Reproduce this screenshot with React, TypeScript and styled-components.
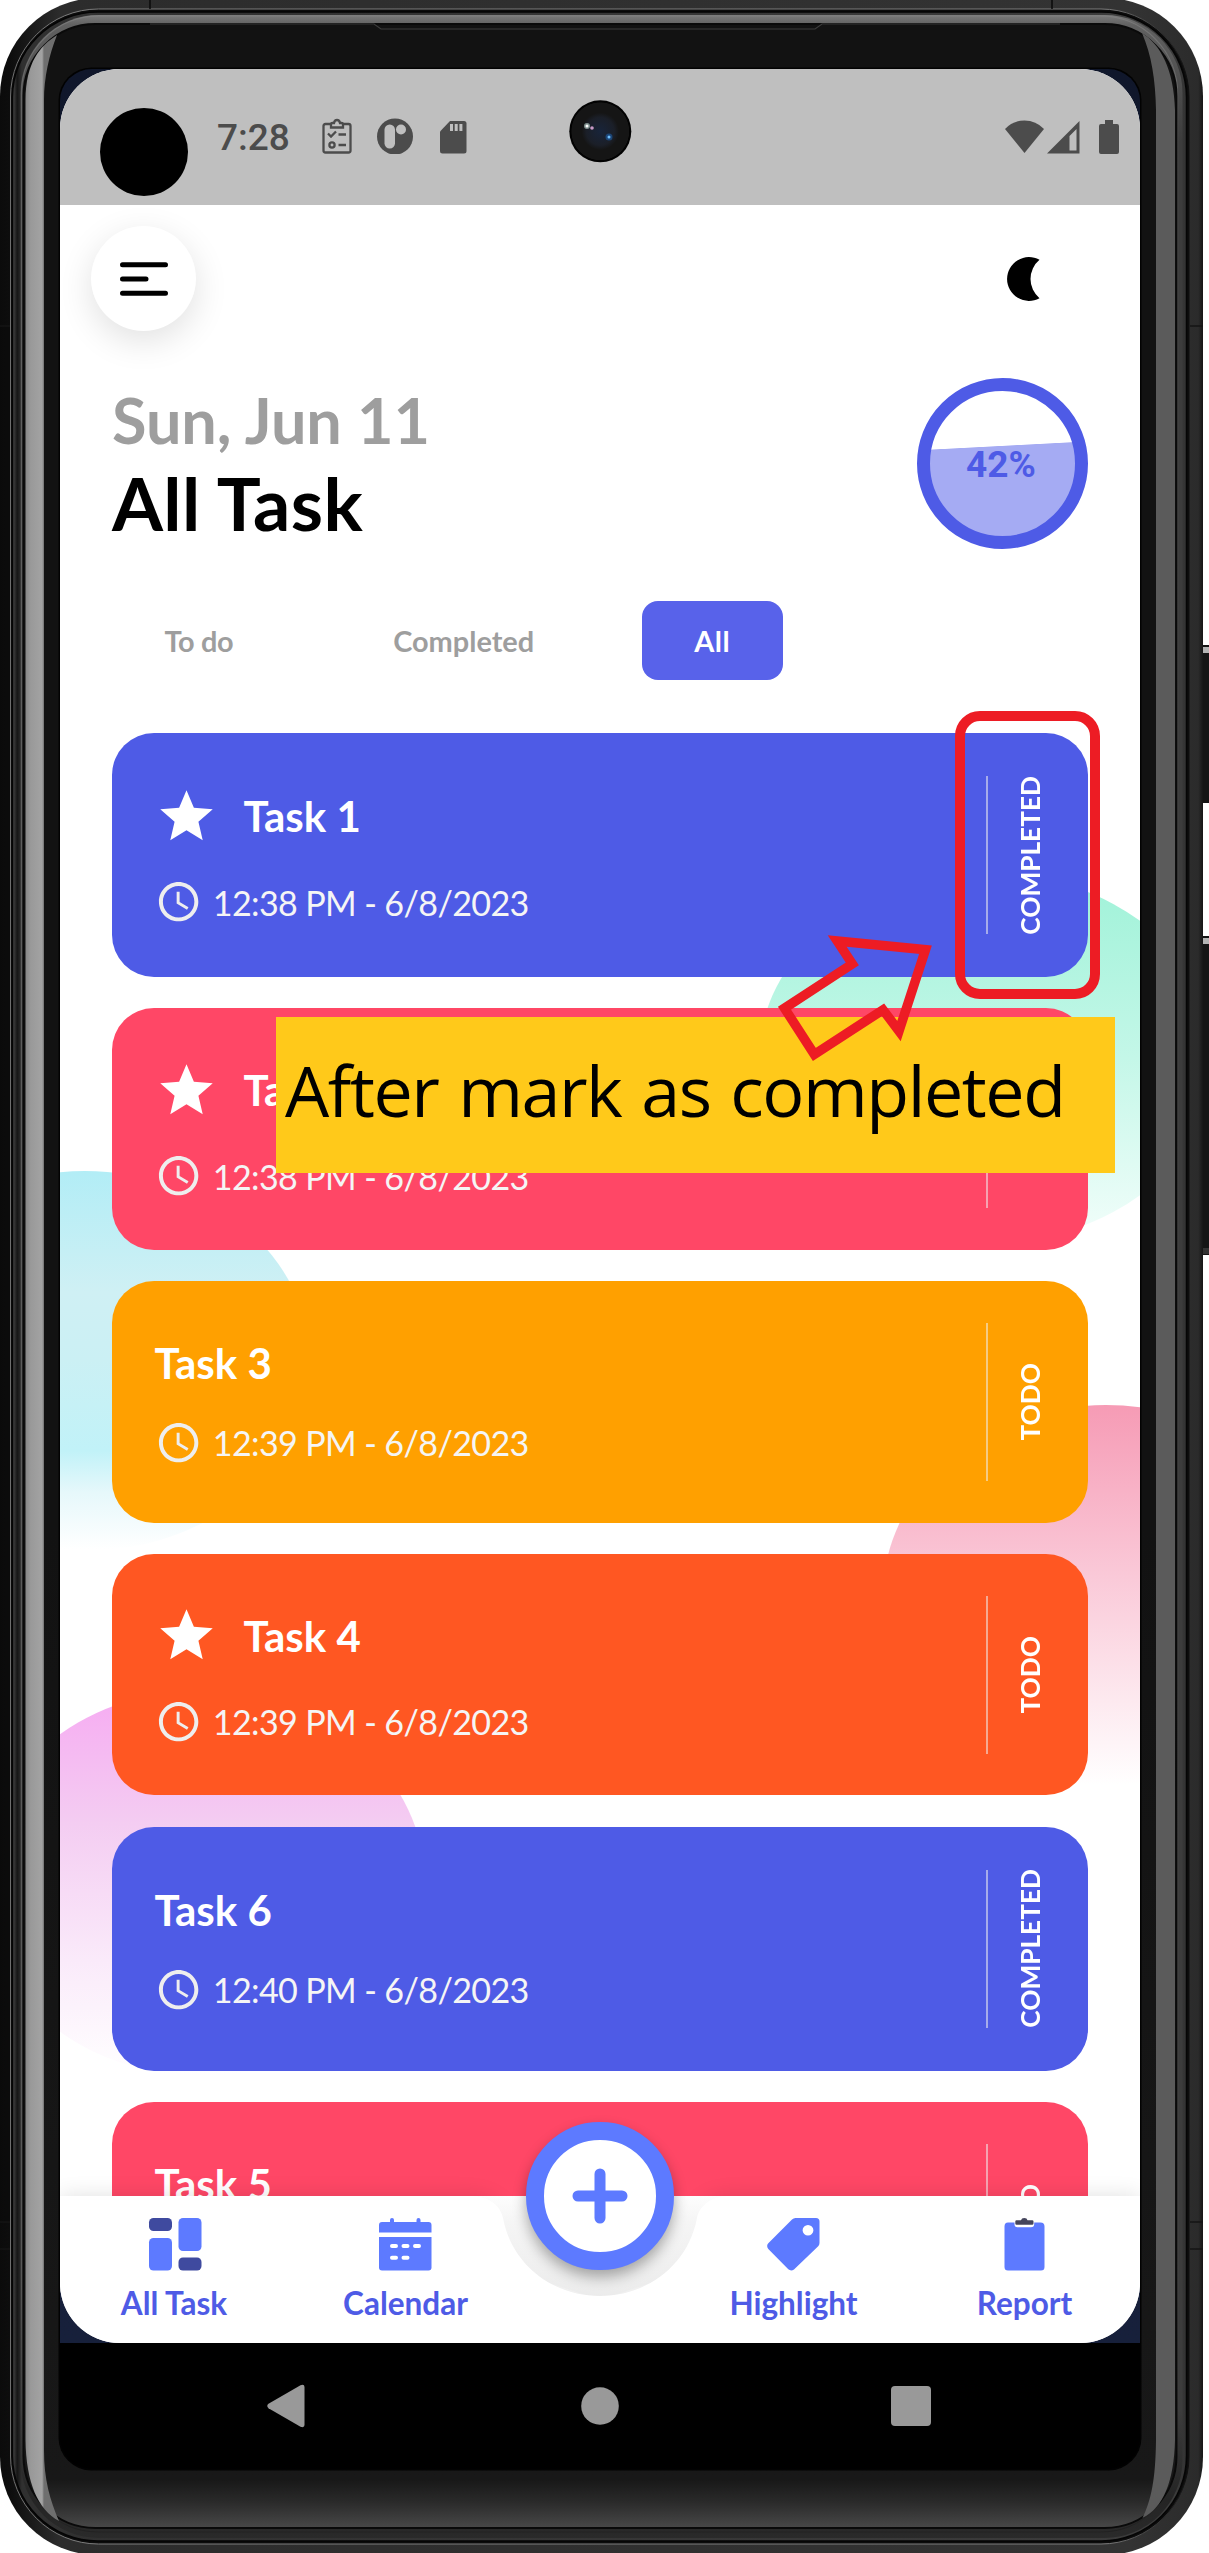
import React from "react";
import styled, { createGlobalStyle, css } from "styled-components";

const GlobalStyle = createGlobalStyle`
  * { box-sizing: border-box; }
  html, body { margin: 0; padding: 0; background: #ffffff; }
  body { font-family: Lato, "Open Sans", sans-serif; }
`;

const INDIGO = "#4e5be6";
const ROSE = "#ff4766";
const AMBER = "#ffa000";
const ORANGE = "#ff5722";
const SKY = "#5d7aff";

/* ---------- device ---------- */

const Stage = styled.div`
  position: relative;
  width: 1209px;
  height: 2553px;
  overflow: hidden;
  padding: 69px 0 0 60px;
`;

const FrameArt = styled.svg`
  position: absolute;
  inset: 0;
  display: block;
`;

const Screen = styled.div`
  position: relative;
  width: 1080px;
  height: 2400px;
  border-radius: 32px;
  overflow: hidden;
  background: #000;
  display: flex;
  flex-direction: column;
`;

const AppBackdrop = styled.div`
  height: 2274px;
  background: linear-gradient(#10172b, #17203b);
`;

const AppWindow = styled.div`
  position: relative;
  height: 100%;
  border-radius: 60px;
  overflow: hidden;
  background: #fff;
  display: flex;
  flex-direction: column;
`;

/* ---------- status bar ---------- */

const StatusBar = styled.header`
  flex: none;
  height: 136px;
  background: #bfbfbf;
  display: flex;
  align-items: flex-start;
  padding: 47px 21px 0 157px;
`;

const Clock = styled.span`
  font: 500 37px/44px Roboto, sans-serif;
  color: #4c4c4c;
  width: 101px;
`;

const StatusGlyph = styled.svg<{ $gap?: number }>`
  display: block;
  flex: none;
  margin: 2px 0 0 ${(p) => p.$gap ?? 0}px;
`;

const Spacer = styled.div`
  flex: 1;
`;

const CutOut = styled.div`
  position: absolute;
  left: 40px;
  top: 39px;
  width: 88px;
  height: 88px;
  border-radius: 50%;
  background: #000;
`;

const Lens = styled.svg`
  position: absolute;
  left: 509px;
  top: 31px;
`;

/* ---------- page ---------- */

const Body = styled.main`
  position: relative;
  height: 1991px;
  flex: none;
  overflow: hidden;
  padding: 21px 52.5px 0 52px;
  display: flex;
  flex-direction: column;
`;

const Blobs = styled.svg`
  position: absolute;
  left: 0;
  top: 0;
`;

const TopRow = styled.div`
  position: relative;
  display: flex;
  align-items: center;
  justify-content: space-between;
  margin: 0 48px 47px -21px;
`;

const MenuButton = styled.button`
  width: 105px;
  height: 105px;
  border: 0;
  padding: 0;
  border-radius: 50%;
  background: #fff;
  box-shadow: 0 10px 34px rgba(0, 0, 0, 0.12);
  display: flex;
  align-items: center;
  justify-content: center;
`;

const Heading = styled.section`
  position: relative;
  display: flex;
  justify-content: space-between;
  height: 171px;
  margin-bottom: 52px;
`;

const HeadingText = styled.div`
  padding-top: 3px;
`;

const Today = styled.div`
  font-size: 63px;
  line-height: 77px;
  font-weight: 700;
  letter-spacing: -0.1px;
  color: #9e9e9e;
`;

const PageTitle = styled.h1`
  margin: 0;
  font-size: 73.5px;
  line-height: 89px;
  font-weight: 700;
  letter-spacing: 0.4px;
  color: #000;
`;

const Gauge = styled.div`
  position: relative;
  width: 171px;
  height: 171px;
  border-radius: 50%;
  border: 13px solid ${INDIGO};
  background: linear-gradient(177deg, #fff 38.2%, #a5abf3 38.7%);
  display: flex;
  align-items: center;
  justify-content: center;
  padding: 2px 2px 0 0;
  font: 700 37px/40px Roboto, sans-serif;
  color: ${INDIGO};
`;

const Tabs = styled.nav`
  position: relative;
  display: flex;
  gap: 55px;
  margin-bottom: 53px;
`;

const Tab = styled.button<{ $active?: boolean; $tracking?: number }>`
  border: 0;
  height: 79px;
  padding: 0 52.5px;
  border-radius: 16px;
  background: ${(p) => (p.$active ? "#5862ea" : "transparent")};
  color: ${(p) => (p.$active ? "#fff" : "#9e9e9e")};
  font: 700 28.9px/79px Lato, sans-serif;
  letter-spacing: ${(p) => p.$tracking ?? 0}px;
  white-space: nowrap;
`;

const TaskList = styled.section`
  position: relative;
  display: flex;
  flex-direction: column;
  gap: 31.3px;
`;

const Card = styled.article<{ $color: string; $tall: boolean }>`
  flex: none;
  height: ${(p) => (p.$tall ? 244 : 241.5)}px;
  border-radius: 42px;
  background: ${(p) => p.$color};
  color: #fff;
  padding: 0 14px 0 42.5px;
  display: flex;
  align-items: center;
`;

const CardText = styled.div`
  flex: 1;
  display: flex;
  flex-direction: column;
  gap: 31px;
`;

const TitleRow = styled.div`
  display: flex;
  align-items: center;
  gap: 26px;
  font-size: 42px;
  line-height: 50px;
  font-weight: 700;
`;

const MetaRow = styled.div`
  display: flex;
  align-items: center;
  gap: 11px;
  height: 47px;
  font-size: 34.1px;
  line-height: 41px;
  letter-spacing: -0.63px;
  color: #f5f5f5;
`;

const Glyph = styled.svg`
  display: block;
  flex: none;
`;

const Divider = styled.i`
  width: 1.5px;
  height: 158px;
  background: rgba(238, 238, 238, 0.55);
`;

const Status = styled.div`
  width: 86px;
  padding-right: 1.5px;
  display: flex;
  justify-content: center;
`;

const StatusLabel = styled.span`
  writing-mode: vertical-rl;
  transform: rotate(180deg);
  font-size: 26.25px;
  line-height: 32px;
  font-weight: 700;
  white-space: nowrap;
`;

/* ---------- bottom bar ---------- */

const BottomBar = styled.footer`
  position: relative;
  flex: none;
  height: 147px;
`;

const BarShape = styled.svg`
  position: absolute;
  left: 0;
  bottom: 0;
  overflow: visible;
`;

const BarItems = styled.div`
  position: relative;
  height: 147px;
  display: grid;
  grid-template-columns: 228px 235px 153px 235px 227px;
`;

const barItem = css`
  display: flex;
  flex-direction: column;
  align-items: center;
  padding-top: 22px;
  gap: 12px;
`;

const BarItem = styled.a<{ $column: number }>`
  ${barItem}
  grid-column: ${(p) => p.$column};
  color: ${INDIGO};
  font-size: 31.5px;
  line-height: 40px;
  font-weight: 700;
  white-space: nowrap;
`;

const AddButton = styled.button`
  position: absolute;
  left: 466px;
  top: -74px;
  width: 147.5px;
  height: 147.5px;
  padding: 0;
  border-radius: 50%;
  border: 18.5px solid ${SKY};
  background: #fff;
  box-shadow: 0 7px 14px rgba(0, 0, 0, 0.32);
  display: flex;
  align-items: center;
  justify-content: center;
`;

const SystemNav = styled.div`
  position: relative;
  height: 126px;
  display: flex;
  align-items: center;
  justify-content: space-between;
  padding: 0 209px 0 206.5px;
`;

/* ---------- annotations ---------- */

const Highlight = styled.div`
  position: absolute;
  left: 955px;
  top: 711px;
  width: 145px;
  height: 288px;
  border: 10px solid #ed1c24;
  border-radius: 25px;
`;

const Note = styled.div`
  position: absolute;
  left: 276px;
  top: 1017px;
  width: 838.5px;
  height: 156px;
  background: #ffc91a;
  color: #000;
  padding-left: 9px;
  font: 400 70px/147px "Open Sans", "Noto Sans", sans-serif;
  letter-spacing: -1.45px;
  word-spacing: 3px;
  white-space: nowrap;
`;

const Pointer = styled.svg`
  position: absolute;
  left: 770px;
  top: 920px;
`;

function DeviceFrame() {
  return (
    <FrameArt width="1209" height="2553" viewBox="0 0 1209 2553">
      <defs>
        <linearGradient id="outer" x1="0" x2="1" y1="0" y2="0">
          <stop offset="0" stopColor="#0b0b0b" />
          <stop offset="0.008" stopColor="#0d0d0d" />
          <stop offset="0.05" stopColor="#2c2c2c" />
          <stop offset="0.94" stopColor="#333" />
          <stop offset="0.996" stopColor="#2b2b2b" />
          <stop offset="1" stopColor="#161616" />
        </linearGradient>
        <linearGradient id="rimLine" x1="0" x2="0" y1="0" y2="1">
          <stop offset="0" stopColor="#858585" />
          <stop offset="0.03" stopColor="#777" />
          <stop offset="0.9" stopColor="#6a6a6a" />
          <stop offset="1" stopColor="#1c1c1c" />
        </linearGradient>
        <linearGradient id="outerLine" x1="0" x2="1" y1="0" y2="0">
          <stop offset="0" stopColor="#6f6f6f" />
          <stop offset="0.05" stopColor="#7c7c7c" />
          <stop offset="0.93" stopColor="#7c7c7c" />
          <stop offset="1" stopColor="#0e0e0e" />
        </linearGradient>
        <linearGradient id="groove" x1="0" x2="1" y1="0" y2="0">
          <stop offset="0" stopColor="#4a4a4a" />
          <stop offset="0.004" stopColor="#161616" />
          <stop offset="0.008" stopColor="#303030" />
          <stop offset="0.99" stopColor="#3c3c3c" />
          <stop offset="1" stopColor="#333" />
        </linearGradient>
        <linearGradient id="bevel" x1="0" x2="0" y1="0" y2="1">
          <stop offset="0" stopColor="#7a7a7a" />
          <stop offset="0.004" stopColor="#616161" />
          <stop offset="0.05" stopColor="#3c3c3c" />
          <stop offset="0.95" stopColor="#3c3c3c" />
          <stop offset="0.985" stopColor="#242424" />
          <stop offset="1" stopColor="#2a2a2a" />
        </linearGradient>
        <linearGradient id="glass" x1="0" x2="0" y1="24" y2="2527" gradientUnits="userSpaceOnUse">
          <stop offset="0" stopColor="#121212" />
          <stop offset="0.6" stopColor="#121212" />
          <stop offset="0.981" stopColor="#181818" />
          <stop offset="0.99" stopColor="#2a2a2a" />
          <stop offset="1" stopColor="#474747" />
        </linearGradient>
        <linearGradient id="shineL" x1="25" x2="44" y1="0" y2="0" gradientUnits="userSpaceOnUse">
          <stop offset="0" stopColor="#858585" />
          <stop offset="0.3" stopColor="#999" />
          <stop offset="0.9" stopColor="#a3a3a3" />
          <stop offset="1" stopColor="#6f6f6f" />
        </linearGradient>
      </defs>
      <rect x="1201" y="645" width="10" height="158" rx="1.500" fill="#151515" />
      <rect x="1203" y="647" width="8" height="6" fill="#b4b4b4" />
      <rect x="1201" y="936" width="10" height="319" rx="1.500" fill="#151515" />
      <rect x="1203" y="938" width="8" height="6" fill="#b4b4b4" />
      <rect x="1203" y="1248" width="8" height="6" fill="#333" />
      <rect x="0" y="-2" width="1203" height="2557" rx="98" fill="url(#outer)" />
      <rect x="0" y="327" width="10" height="1895" fill="#0a0a0a" opacity="0.4" />
      <rect x="10.5" y="9" width="1178.5" height="2535" rx="88" fill="#0c0c0c" stroke="url(#outerLine)" />
      <rect x="12.5" y="12" width="1174" height="2529" rx="85" fill="url(#groove)" stroke="#050505" strokeWidth="1.5" />
      <rect x="20.5" y="15" width="1162" height="2523" rx="78" fill="url(#bevel)" />
      <rect x="21.5" y="16" width="1156" height="2516" rx="77" fill="none" stroke="url(#rimLine)" strokeWidth="1.2" opacity="0.6" />
      <rect x="23.5" y="24" width="1153" height="2504" rx="72" fill="url(#glass)" stroke="#0a0a0a" strokeWidth="2" />
      <path d="M150 24H374L381 29H815L822 24H1060" fill="none" stroke="#3c3c3c" strokeWidth="1.2" />
      <path d="M57 35C40 46 26 62 25.5 100V2440C26 2482 38 2510 59 2521C50 2500 44 2480 44 2450V100C44 78 49 55 57 35Z" fill="url(#shineL)" />
      <path d="M1142 33C1161 45 1174 70 1175 110V2440C1174 2482 1163 2508 1142.500 2518C1151 2500 1155.500 2480 1156 2440V110C1155.500 80 1151.500 55 1142 33Z" fill="#5b5b5b" />
      <path d="M150 0V9M1052 0V9" stroke="#0a0a0a" strokeWidth="1.500" />
      <path d="M0 326H10M1190 326H1203M0 2222H10M0 2249H10M1190 2222H1203M1190 2249H1203" stroke="#151515" strokeWidth="1.500" />
      <rect x="58.500" y="67.500" width="1083" height="2403" rx="33" fill="#020202" />
    </FrameArt>
  );
}

function StatusIcons() {
  return (
    <>
      <StatusGlyph $gap={4} width="30" height="36" viewBox="0 0 30 36" fill="none" stroke="#4c4c4c" strokeWidth="2.300">
        <path d="M9 6H3.500Q1.500 6 1.500 8V32.500Q1.500 34.500 3.500 34.500H26.500Q28.500 34.500 28.500 32.500V8Q28.500 6 26.500 6H21" />
        <path d="M9 9.500V6.500Q9 5 10.500 5H12Q12.500 2 15 2T18 5H19.500Q21 5 21 6.500V9.500Z" />
        <path d="M6 15.500L9 18.500L14 13.500M16.500 16.500H24M16.500 27H24" />
        <circle cx="10" cy="27" r="2.600" />
      </StatusGlyph>
      <StatusGlyph $gap={25} width="36" height="36" viewBox="0 0 36 36">
        <circle cx="18" cy="18.500" r="18" fill="#4c4c4c" />
        <rect x="7.500" y="6.500" width="10.500" height="24" rx="5.200" fill="#bfbfbf" />
        <circle cx="24" cy="11.500" r="5" fill="#bfbfbf" />
      </StatusGlyph>
      <StatusGlyph $gap={26.5} width="27" height="36" viewBox="0 0 27 36">
        <path d="M10 3H24Q26.500 3 26.500 5.500V33Q26.500 35.500 24 35.500H2.500Q0 35.500 0 33V13.500Z" fill="#4c4c4c" />
        <path d="M11.500 6V13M16.200 6V13M20.900 6V13" stroke="#bfbfbf" strokeWidth="3" />
      </StatusGlyph>
      <Spacer />
      <StatusGlyph width="39" height="36" viewBox="0 0 39 36">
        <path d="M19.500 35L0 11Q8 2.500 19.500 2.500T39 11Z" fill="#4c4c4c" />
      </StatusGlyph>
      <StatusGlyph $gap={3.5} width="33" height="36" viewBox="0 0 33 36">
        <path d="M0 35.500L32.500 3V35.500ZM22.500 32.500H29.500V11L22.500 18Z" fill="#4c4c4c" fillRule="evenodd" />
      </StatusGlyph>
      <StatusGlyph $gap={19} width="20" height="36" viewBox="0 0 20 36">
        <path d="M6 2H14V6H18Q20 6 20 8V34Q20 36 18 36H2Q0 36 0 34V8Q0 6 2 6H6Z" fill="#4c4c4c" />
      </StatusGlyph>
    </>
  );
}

function BackgroundBlobs() {
  return (
    <Blobs width="1080" height="1991" viewBox="60 205 1080 1991">
      <defs>
        <linearGradient id="mint" x1="0" x2="0" y1="0" y2="1">
          <stop offset="0" stopColor="#9ff2d8" />
          <stop offset="0.5" stopColor="#c4f7e8" />
          <stop offset="1" stopColor="#f3fefb" />
        </linearGradient>
        <linearGradient id="aqua" x1="0" x2="0" y1="1171" y2="1549" gradientUnits="userSpaceOnUse">
          <stop offset="0" stopColor="#b2edf6" />
          <stop offset="0.32" stopColor="#cff0f4" />
          <stop offset="0.5" stopColor="#cbf0f4" />
          <stop offset="0.74" stopColor="#c1f2f8" />
          <stop offset="0.85" stopColor="#e6f8fb" />
          <stop offset="1" stopColor="#fff" />
        </linearGradient>
        <linearGradient id="pink" x1="0" x2="0" y1="0" y2="1">
          <stop offset="0" stopColor="#f69bb5" />
          <stop offset="0.45" stopColor="#fac9d8" />
          <stop offset="1" stopColor="#fff" />
        </linearGradient>
        <linearGradient id="violet" x1="0" x2="0" y1="0" y2="1">
          <stop offset="0" stopColor="#f6aaf2" />
          <stop offset="0.35" stopColor="#f4cdf2" />
          <stop offset="0.7" stopColor="#faeafa" />
          <stop offset="1" stopColor="#fff" />
        </linearGradient>
      </defs>
      <ellipse cx="987" cy="1058" rx="228" ry="185" fill="url(#mint)" />
      <ellipse cx="85" cy="1361" rx="225" ry="190" fill="url(#aqua)" />
      <ellipse cx="1106" cy="1595" rx="223" ry="190" fill="url(#pink)" />
      <ellipse cx="202" cy="1883" rx="223" ry="193" fill="url(#violet)" />
    </Blobs>
  );
}

function StarIcon() {
  return (
    <Glyph width="63" height="63" viewBox="0 0 24 24" fill="#fff">
      <path d="M12 17.270L18.180 21l-1.640-7.030L22 9.240l-7.190-.610L12 2 9.190 8.630 2 9.240l5.460 4.730L5.820 21z" />
    </Glyph>
  );
}

function ClockIcon() {
  return (
    <Glyph width="47.250" height="47.250" viewBox="0 0 24 24" fill="#eee">
      <path d="M11.990 2C6.470 2 2 6.480 2 12s4.470 10 9.990 10C17.520 22 22 17.520 22 12S17.520 2 11.990 2zM12 20c-4.420 0-8-3.580-8-8s3.580-8 8-8 8 3.580 8 8-3.580 8-8 8zm.5-13H11v6l5.250 3.150.750-1.230-4.500-2.670z" />
    </Glyph>
  );
}

type Task = { title: string; when: string; color: string; starred?: boolean; done?: boolean };

const tasks: Task[] = [
  { title: "Task 1", when: "12:38 PM - 6/8/2023", color: INDIGO, starred: true, done: true },
  { title: "Task 2", when: "12:38 PM - 6/8/2023", color: ROSE, starred: true },
  { title: "Task 3", when: "12:39 PM - 6/8/2023", color: AMBER },
  { title: "Task 4", when: "12:39 PM - 6/8/2023", color: ORANGE, starred: true },
  { title: "Task 6", when: "12:40 PM - 6/8/2023", color: INDIGO, done: true },
  { title: "Task 5", when: "12:40 PM - 6/8/2023", color: ROSE },
];

function TaskCard({ task }: { task: Task }) {
  return (
    <Card $color={task.color} $tall={!!task.done}>
      <CardText>
        <TitleRow>
          {task.starred && <StarIcon />}
          {task.title}
        </TitleRow>
        <MetaRow>
          <ClockIcon />
          {task.when}
        </MetaRow>
      </CardText>
      <Divider />
      <Status>
        <StatusLabel>{task.done ? "COMPLETED" : "TODO"}</StatusLabel>
      </Status>
    </Card>
  );
}

function DashboardIcon() {
  return (
    <Glyph width="53" height="53" viewBox="-1 0 53 53" overflow="visible">
      <rect x="0" y="0" width="23" height="13" rx="4.500" fill="#3f4a9f" />
      <rect x="0" y="20" width="23" height="32.500" rx="4.500" fill={SKY} />
      <rect x="29.500" y="0" width="23" height="33" rx="4.500" fill={SKY} />
      <rect x="29.500" y="39.500" width="23" height="13" rx="4.500" fill="#3f4a9f" />
    </Glyph>
  );
}

function CalendarIcon() {
  return (
    <Glyph width="53" height="53" viewBox="0 0 53 53">
      <path d="M0 14.500V7Q0 4 3 4H11V2Q11 0 13 0T15 2V4H37.500V2Q37.500 0 39.500 0T41.500 2V4H49.500Q52.500 4 52.500 7V14.500Z" fill={SKY} />
      <path d="M0 19H52.500V49.500Q52.500 52.500 49.500 52.500H3Q0 52.500 0 49.500Z" fill={SKY} />
      <path d="M13 28H17M24.500 28H28.500M36 28H40M13 39.700H17M24.500 39.700H28.500" stroke="#fff" strokeWidth="4" strokeLinecap="round" />
    </Glyph>
  );
}

function TagIcon() {
  return (
    <Glyph width="53" height="53" viewBox="0 0 53 53">
      <path
        d="M28.500 0H49Q52.500 0 52.500 3.500V25Q52.500 27 51.200 28.300L27 51.500Q24 53.500 21.300 51.300L1.300 31Q-1 28 1.300 25.300L25 1.500Q26.500 0 28.500 0ZM41 7A5.400 5.200 0 1 0 41 17.400A5.400 5.200 0 1 0 41 7Z"
        fill={SKY}
        fillRule="evenodd"
      />
    </Glyph>
  );
}

function ReportIcon() {
  return (
    <Glyph width="53" height="53" viewBox="0 0 53 53">
      <path d="M10 4.500H16.500V6Q16.500 9.200 19.500 9.200H33Q36.200 9.200 36.200 6V4.500H42.500Q46.500 4.500 46.500 8.500V49Q46.500 52.500 43 52.500H10Q6.500 52.500 6.500 49V8.500Q6.500 4.500 10 4.500Z" fill={SKY} />
      <path d="M18.500 2.300H23Q23.500 0 26.300 0T29.500 2.300H34.200Q35.500 2.300 35.500 3.500V5.500Q35.500 6.700 34.200 6.700H18.500Q17.300 6.700 17.300 5.500V3.500Q17.300 2.300 18.500 2.300Z" fill="#45455c" />
    </Glyph>
  );
}

export default function App() {
  return (
    <>
      <GlobalStyle />
      <Stage>
        <DeviceFrame />
        <Screen>
          <AppBackdrop>
            <AppWindow>
              <StatusBar>
                <Clock>7:28</Clock>
                <StatusIcons />
              </StatusBar>
              <Body>
                <BackgroundBlobs />
                <TopRow>
                  <MenuButton aria-label="Menu">
                    <Glyph width="48" height="34" viewBox="0 0 48 34" stroke="#000" strokeWidth="5" strokeLinecap="round">
                      <path d="M2.500 2.800H45.500M2.500 17H26M2.500 31.300H45.500" />
                    </Glyph>
                  </MenuButton>
                  <Glyph width="33" height="44" viewBox="0 0 33 44">
                    <path d="M32.500 2.800A21.900 21.900 0 1 0 32.500 41.200A25 25 0 0 1 32.500 2.800Z" />
                  </Glyph>
                </TopRow>
                <Heading>
                  <HeadingText>
                    <Today>Sun, Jun 11</Today>
                    <PageTitle>All Task</PageTitle>
                  </HeadingText>
                  <Gauge>42%</Gauge>
                </Heading>
                <Tabs>
                  <Tab $tracking={-0.35}>To do</Tab>
                  <Tab>Completed</Tab>
                  <Tab $active $tracking={0.6}>
                    All
                  </Tab>
                </Tabs>
                <TaskList>
                  {tasks.map((task) => (
                    <TaskCard key={task.title} task={task} />
                  ))}
                </TaskList>
              </Body>
              <BottomBar>
                <BarShape width="1080" height="147" viewBox="0 0 1080 147">
                  <defs>
                    <filter id="barShadow" x="-5%" y="-30%" width="110%" height="160%">
                      <feGaussianBlur stdDeviation="11" />
                    </filter>
                    <linearGradient id="notch" x1="0" x2="0" y1="0" y2="1">
                      <stop offset="0" stopColor="#fdfdfd" />
                      <stop offset="0.25" stopColor="#f5f5f5" />
                      <stop offset="1" stopColor="#ebebeb" />
                    </linearGradient>
                  </defs>
                  <path
                    d="M0 0H400Q438 0 442 18C452 70 492 100 540 100S628 70 638 18Q642 0 680 0H1080V147H0Z"
                    fill="#000"
                    opacity="0.12"
                    filter="url(#barShadow)"
                  />
                  <path d="M409 0H671V60L540 104L409 60Z" fill="url(#notch)" />
                  <path d="M0 0H409C432 0 441 12 443 22C452 70 494 100 540 100S628 70 637 22C639 12 648 0 671 0H1080V147H0Z" fill="#fff" />
                </BarShape>
                <BarItems>
                  <BarItem $column={1}>
                    <DashboardIcon />
                    All Task
                  </BarItem>
                  <BarItem $column={2}>
                    <CalendarIcon />
                    Calendar
                  </BarItem>
                  <BarItem $column={4}>
                    <TagIcon />
                    Highlight
                  </BarItem>
                  <BarItem $column={5}>
                    <ReportIcon />
                    Report
                  </BarItem>
                </BarItems>
                <AddButton aria-label="Add task">
                  <Glyph width="56" height="56" viewBox="0 0 56 56" stroke={SKY} strokeWidth="11" strokeLinecap="round">
                    <path d="M28 6V50M6 28H50" />
                  </Glyph>
                </AddButton>
              </BottomBar>
            </AppWindow>
          </AppBackdrop>
          <SystemNav>
            <Glyph width="42" height="44" viewBox="0 0 42 44" fill="#999">
              <path d="M1.500 19.800L33.500 1.200Q37.500 0 37.500 3V41Q37.500 44 33.500 42.800L1.500 24.200Q-1 22 1.500 19.800Z" />
            </Glyph>
            <Glyph width="38" height="38" viewBox="0 0 38 38" fill="#999">
              <circle cx="19" cy="19" r="18.800" />
            </Glyph>
            <Glyph width="40" height="40" viewBox="0 0 40 40" fill="#999">
              <rect width="40" height="40" rx="4" />
            </Glyph>
          </SystemNav>
          <CutOut />
          <Lens width="63" height="63" viewBox="0 0 63 63">
            <defs>
              <radialGradient id="lens">
                <stop offset="0" stopColor="#18243a" />
                <stop offset="0.45" stopColor="#1b1f28" />
                <stop offset="0.6" stopColor="#151515" />
                <stop offset="0.92" stopColor="#151515" />
                <stop offset="0.94" stopColor="#020202" />
              </radialGradient>
            </defs>
            <circle cx="31.300" cy="31.300" r="31" fill="url(#lens)" />
            <circle cx="18" cy="26" r="3" fill="#9fb6b0" opacity="0.75" />
            <circle cx="18" cy="26" r="1.500" fill="#fff" />
            <circle cx="23" cy="28" r="1.800" fill="#c99ac6" />
            <circle cx="40" cy="37" r="3.500" fill="#1e5fa8" opacity="0.6" />
            <circle cx="40" cy="37" r="1.500" fill="#6fc0ff" />
          </Lens>
        </Screen>
        <Highlight />
        <Note>After mark as completed</Note>
        <Pointer width="170" height="160" viewBox="770 920 170 160">
          <path
            d="M837.200 941L925.500 949.700L899 1031L883 1009.800L814.300 1054.400L784.500 1008.200L852.300 963.900Z"
            fill="none"
            stroke="#ed1c24"
            strokeWidth="9.500"
            strokeMiterlimit="10"
          />
        </Pointer>
      </Stage>
    </>
  );
}
